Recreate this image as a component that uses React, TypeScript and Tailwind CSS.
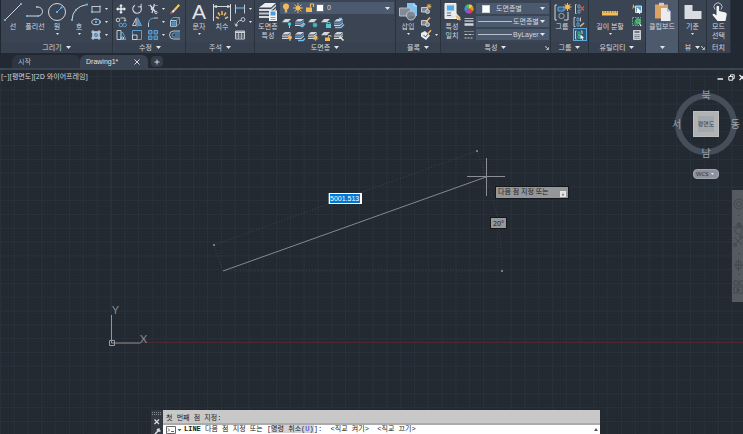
import type { ReactNode } from "react";
import { useState } from "react";

const BLUE = "#5fa8dc";
const LIGHT = "#d3d7dd";
const AMBER = "#f0b95a";

const Caret = ({ small }: { small?: boolean }) => (
  <svg
    viewBox="0 0 5 3"
    className={small ? "w-[3px] h-[2px] shrink-0" : "w-[5px] h-[3px] shrink-0"}
  >
    <path d="M0 0h5L2.5 3z" fill="#e2e5ea" />
  </svg>
);

/* 12 x 12 drawing used for the small tools */
const S = ({ children }: { children: ReactNode }) => (
  <svg
    viewBox="0 0 12 12"
    className="size-3 shrink-0"
    fill="none"
    stroke={LIGHT}
    strokeWidth={0.9}
  >
    {children}
  </svg>
);

/* 20 x 20 drawing used for the large tools */
const L = ({ children }: { children: ReactNode }) => (
  <svg
    viewBox="0 0 20 20"
    className="size-5 shrink-0"
    fill="none"
    stroke={LIGHT}
    strokeWidth={1}
  >
    {children}
  </svg>
);

const Dot = ({ x, y }: { x: number; y: number }) => (
  <rect x={x - 0.9} y={y - 0.9} width="1.8" height="1.8" fill="#74bdf0" stroke="none" />
);

const Sheets = ({ edge = LIGHT }: { edge?: string }) => (
  <g stroke="none">
    <path d="M4 2h6L7 4.6H1z" fill={LIGHT} />
    <path d="M1 5.6h6L10 3v1.2L7 6.8H1z" fill={edge} />
    <path d="M1 7.8h6l3-2.6v1.2L7 9H1z" fill={LIGHT} />
  </g>
);

const Sheet = () => <path d="M4 2h6L7 5.2H1z" fill={LIGHT} stroke="none" />;

type BigButtonProps = {
  icon: ReactNode;
  label: string;
  second?: string;
  caret?: boolean;
  className: string;
};

const BigButton = ({ icon, label, second, caret, className }: BigButtonProps) => (
  <button
    type="button"
    className={`flex flex-col items-center shrink-0 pt-0.5 hover:bg-white/10 ${className}`}
  >
    {icon}
    <span className="leading-[9px] whitespace-nowrap">{label}</span>
    {second && <span className="leading-[9px] whitespace-nowrap">{second}</span>}
    {caret && (
      <span className="pt-0.5">
        <Caret small />
      </span>
    )}
  </button>
);

type Tool = { name: string; icon: ReactNode; caret?: boolean; active?: boolean };

const ToolColumn = ({ tools, className }: { tools: Tool[]; className: string }) => (
  <div className={`flex flex-col shrink-0 pt-0.5 ${className}`}>
    {tools.map((tool) => (
      <button
        key={tool.name}
        type="button"
        aria-label={tool.name}
        className={`h-[13px] flex items-center gap-[3px] hover:bg-white/10 ${
          tool.active ? "bg-[#2f5878] outline outline-[#5fa8dc] -outline-offset-1" : ""
        }`}
      >
        {tool.icon}
        {tool.caret && <Caret small />}
      </button>
    ))}
  </div>
);

type PanelProps = {
  title: string;
  caret?: boolean;
  launcher?: boolean;
  highlight?: boolean;
  className: string;
  children: ReactNode;
};

const Panel = ({ title, caret = true, launcher, highlight, className, children }: PanelProps) => (
  <section
    className={`flex flex-col shrink-0 border-r border-[#2a323e] ${
      highlight ? "bg-[#4d596c]" : "bg-[#3b4453]"
    } ${className}`}
  >
    <div className="h-[42px] flex">{children}</div>
    <div
      className={`h-[11px] flex items-center justify-center gap-1 relative ${
        highlight ? "" : "bg-[#384150]"
      }`}
    >
      {title && <span>{title}</span>}
      {caret && <Caret />}
      {launcher && (
        <svg viewBox="0 0 5 5" className="size-1 absolute right-px bottom-[3px]">
          <path d="M0 0h2M0 0v2M1 1l3 3M4.5 1.5v3h-3" stroke={LIGHT} fill="none" />
        </svg>
      )}
    </div>
  </section>
);

const drawTools: Tool[] = [
  {
    name: "직사각형",
    caret: true,
    icon: (
      <S>
        <rect x="2" y="3.5" width="8" height="5.5" />
        <Dot x={10} y={3.5} />
        <Dot x={2} y={9} />
      </S>
    ),
  },
  {
    name: "타원",
    caret: true,
    icon: (
      <S>
        <ellipse cx="6" cy="6" rx="4.3" ry="2.7" />
        <Dot x={6} y={6} />
        <Dot x={6} y={3.2} />
        <Dot x={10} y={6} />
      </S>
    ),
  },
  {
    name: "해치",
    caret: true,
    icon: (
      <S>
        <rect x="3" y="3" width="6" height="6" fill="#4f8ab5" />
        <path d="M3 1v10M9 1v10M1 3h10M1 9h10" />
        <path d="m3.5 8.5 5-5M3.5 5.5l2-2M6.5 8.5l2-2" stroke="#9bd0f5" strokeWidth=".6" />
      </S>
    ),
  },
];

const modifyColumns: Tool[][] = [
  [
    {
      name: "이동",
      icon: (
        <S>
          <path
            d="M6 1 8 3.3H6.7v2h2V4L11 6 8.7 8V6.7h-2v2H8L6 11 4 8.7h1.3v-2h-2V8L1 6l2.3-2v1.3h2v-2H4z"
            fill="#eef0f3"
            stroke="none"
          />
        </S>
      ),
    },
    {
      name: "복사",
      icon: (
        <S>
          <circle cx="3" cy="4" r="1.8" />
          <path d="M5.5 2H10v3M8.8 4 10 5.3 11.2 4" />
          <circle cx="5.8" cy="9" r="1.8" stroke={BLUE} />
          <circle cx="9.6" cy="9" r="1.8" stroke={BLUE} />
        </S>
      ),
    },
    {
      name: "신축",
      icon: (
        <S>
          <path d="M2 1.5h4v9H2z" />
          <path d="M6 3.5h2l2.7 7H6z" stroke={BLUE} />
          <path d="M5 9h4M7.5 7.5 9 9l-1.5 1.5" />
        </S>
      ),
    },
  ],
  [
    {
      name: "회전",
      icon: (
        <S>
          <path d="M4 2.2A4.300 4.300 0 1 0 9.200 3" strokeWidth="1.1" />
          <path d="M6.800 3.800h3.400V.8" />
        </S>
      ),
    },
    {
      name: "대칭",
      icon: (
        <S>
          <path d="M5 2.5v7H1.500z" />
          <path d="M7 2.5v7h3.500z" fill="#3f82b3" stroke={BLUE} />
          <path d="M6 1v10" strokeWidth=".5" />
        </S>
      ),
    },
    {
      name: "축척",
      icon: (
        <S>
          <path d="M1.5 1.5h9v9h-9z" stroke={BLUE} />
          <path d="M1.5 6h4.500v4.500H1.500z" />
        </S>
      ),
    },
  ],
  [
    {
      name: "자르기",
      caret: true,
      icon: (
        <S>
          <path d="M1 2.5h3M8 2.5h3" stroke={BLUE} />
          <path d="m3 2 5.500 7M7.500 1 5 10M4.500 3v4" strokeWidth="1.3" />
          <circle cx="9" cy="9.5" r="1.2" />
        </S>
      ),
    },
    {
      name: "모깎기",
      caret: true,
      icon: (
        <S>
          <path d="M1.5 11V7" />
          <path d="M1.5 7Q2 2.500 7 2" stroke={BLUE} />
          <path d="M7 2h4" />
        </S>
      ),
    },
    {
      name: "배열",
      caret: true,
      icon: (
        <S>
          <path d="M1.5 1.5H5V5H1.500z" fill="#3a6c92" stroke={BLUE} />
          <path d="M7 1.5h3.500V5H7zM1.500 7H5v3.500H1.500zM7 7h3.500v3.500H7z" stroke={BLUE} fill="#3a6c92" />
        </S>
      ),
    },
  ],
  [
    {
      name: "지우기",
      icon: (
        <S>
          <g stroke="none">
            <path d="m9.500 1 1.500 1.500L6 8 4.500 6.500z" fill="#f3c667" />
            <path d="M4.500 6.500 6 8 4 10 2.500 8.500z" fill="#f1e9e0" />
            <path d="M2.500 8.500 4 10l-1 .8H1.300V9.500z" fill="#e2574c" />
          </g>
        </S>
      ),
    },
    {
      name: "분해",
      icon: (
        <S>
          <path d="M1.500 4.500h5.800v5.800H1.500z" />
          <path d="m1.500 4.500 2.700-3h6.300v6L7.300 10.300M7.300 4.500l3-3" stroke={BLUE} />
          <path d="M3 6h3v3H3z" fill="#3f82b3" stroke={BLUE} />
        </S>
      ),
    },
    {
      name: "간격띄우기",
      icon: (
        <S>
          <path d="M11 2H4.500a4 4 0 0 0 0 8H11" />
          <path d="M11 4H5a2 2 0 0 0 0 4h6M11 6H6" stroke={BLUE} />
        </S>
      ),
    },
  ],
];

const annotationTools: Tool[] = [
  {
    name: "선형 치수",
    caret: true,
    icon: (
      <S>
        <path d="M1.500 1.500v9M10.500 1.500v9" />
        <path d="M2 5h8" stroke={BLUE} strokeWidth="1.3" />
      </S>
    ),
  },
  {
    name: "지시선",
    caret: true,
    icon: (
      <S>
        <circle cx="9" cy="3.5" r="1.9" />
        <path d="M7 4.500Q3.500 4 2 10M1 7.500 2 10.300l2-1.500" />
      </S>
    ),
  },
  {
    name: "테이블",
    icon: (
      <S>
        <path d="M1.500 2h9v8h-9z" />
        <path d="M1.500 3.300h9" strokeWidth="1.6" />
        <path d="M1.500 6h9M1.500 8h9M4.500 3.500V10M7.500 3.500V10" strokeWidth=".6" />
      </S>
    ),
  },
];

const layerTools: Tool[][] = [
  [
    {
      name: "끄기",
      icon: (
        <S>
          <Sheet />
          <circle cx="8.5" cy="7" r="1.7" fill="#45d0dc" stroke="none" />
          <path d="M8.500 8.500V11" />
        </S>
      ),
    },
    {
      name: "켜기",
      icon: (
        <S>
          <Sheets />
          <circle cx="9" cy="7.5" r="1.9" fill={AMBER} stroke="none" />
          <path d="M9 9v2" />
        </S>
      ),
    },
  ],
  [
    {
      name: "분리",
      icon: (
        <S>
          <Sheets edge={BLUE} />
          <path d="M11 6.500 8.500 9.500 6 8.500" stroke="#74bdf0" strokeWidth="1.6" />
        </S>
      ),
    },
    {
      name: "분리 해제",
      icon: (
        <S>
          <Sheets edge={BLUE} />
          <path d="M4 10.500h5l2-2" stroke="#74bdf0" strokeWidth="1.4" />
        </S>
      ),
    },
  ],
  [
    {
      name: "동결",
      icon: (
        <S>
          <Sheet />
          <circle cx="8" cy="8" r="2" fill="#3aa6ad" stroke="none" />
          <path
            d="M8 5.500v5M5.500 8h5M6.200 6.200l3.600 3.600M9.800 6.200 6.200 9.800"
            stroke="#4cc3c7"
            strokeWidth=".7"
          />
        </S>
      ),
    },
    {
      name: "동결 해제",
      icon: (
        <S>
          <Sheets />
          <circle cx="8.5" cy="8" r="1.7" fill={AMBER} stroke="none" />
          <path d="M8.500 5v6M5.500 8h6M6.500 6l4 4M10.500 6l-4 4" stroke={AMBER} strokeWidth=".7" />
        </S>
      ),
    },
  ],
  [
    {
      name: "잠금",
      icon: (
        <S>
          <Sheet />
          <path d="M6 7h5v4H6z" fill="#58c5cf" stroke="none" />
          <path d="M7 7V5.500h3V7" stroke="#58c5cf" />
        </S>
      ),
    },
    {
      name: "잠금 해제",
      icon: (
        <S>
          <Sheet />
          <path d="M5 7.500h5V11H5z" fill={AMBER} stroke="none" />
          <path d="M8.500 7.500v-2H11V7" stroke={AMBER} />
        </S>
      ),
    },
  ],
  [
    {
      name: "현재로 설정",
      icon: (
        <S>
          <Sheets edge={BLUE} />
          <path d="M2 10.500h6l3-3M6 1.500h3" stroke="#74bdf0" strokeWidth="1.5" />
        </S>
      ),
    },
    {
      name: "일치",
      icon: (
        <S>
          <Sheets />
          <path d="m7 7 3.500 3.500" stroke="#f1e3c0" strokeWidth="1.6" />
          <path d="m6 8 2-2" />
        </S>
      ),
    },
  ],
];

const BlockBase = () => (
  <>
    <path d="M1.500 4.500h6V9h-6z" fill="#7b8490" />
    <circle cx="7.5" cy="8.5" r="2" fill="#8d959f" />
  </>
);

const blockTools: Tool[] = [
  {
    name: "작성",
    icon: (
      <S>
        <BlockBase />
        <path
          d="M9 .8v5M6.500 3.300h5M7.200 1.500l3.600 3.600M10.800 1.500 7.200 5.100"
          stroke={AMBER}
        />
      </S>
    ),
  },
  {
    name: "편집",
    icon: (
      <S>
        <BlockBase />
        <path d="m6 6 4-4.500" stroke={AMBER} strokeWidth="1.6" />
      </S>
    ),
  },
  {
    name: "속성 편집",
    caret: true,
    icon: (
      <S>
        <path d="m1 4 4-2 5 4.500-4 4.500L1 7.500z" fill="#e8eaed" stroke="none" />
        <path d="m3.500 6 2 2L8 5" stroke="#3b4453" />
        <path d="M7.500 5 11 1.300" stroke={AMBER} strokeWidth="1.6" />
      </S>
    ),
  },
];

const propertyTools: Tool[] = [
  {
    name: "색상",
    icon: (
      <S>
        <g stroke="none">
          <path d="M6 6V1.300a4.700 4.700 0 0 1 4.100 2.400z" fill="#f4c63e" />
          <path d="m6 6 4.100-2.300a4.700 4.700 0 0 1 0 4.600z" fill="#f08a2e" />
          <path d="m6 6 4.100 2.300A4.700 4.700 0 0 1 6 10.700z" fill="#e2433a" />
          <path d="M6 6v4.700a4.700 4.700 0 0 1-4.100-2.400z" fill="#a24bd0" />
          <path d="M6 6 1.900 8.300a4.700 4.700 0 0 1 0-4.600z" fill="#3f8fe6" />
          <path d="M6 6 1.900 3.700A4.700 4.700 0 0 1 6 1.300z" fill="#4dbb5b" />
        </g>
      </S>
    ),
  },
  {
    name: "선가중치",
    icon: (
      <S>
        <path d="M1.500 2.500h9" strokeWidth=".8" />
        <path d="M1.500 5h9" strokeWidth="1.3" />
        <path d="M1.500 8.500h9" strokeWidth="2.5" />
      </S>
    ),
  },
  {
    name: "선종류",
    icon: (
      <S>
        <path d="M1.500 2.500h9" strokeDasharray="1 1" />
        <path d="M1.500 5.500h9" strokeDasharray="3 1" />
        <path d="M1.500 9h9" strokeDasharray="2 1" />
      </S>
    ),
  },
];

const groupTools: Tool[] = [
  {
    name: "그룹 해제",
    icon: (
      <S>
        <path d="M3.500 1.500h-1v9h1" />
        <path d="M5 2h2v3H5zM5 7h2v3H5z" stroke={BLUE} />
        <path d="m7.500 3.500 3.500 4M11 3.500l-3.500 4" stroke="#e0504a" strokeWidth="1.3" />
      </S>
    ),
  },
  {
    name: "그룹 편집",
    icon: (
      <S>
        <path d="M2.500 1.500H1v9h1.500" />
        <path d="M4 2h2v3H4zM4 7h2v3H4z" stroke={BLUE} />
        <path d="M7.500 1.500v4" />
        <path d="m7 10.500 4-3.500" stroke={AMBER} strokeWidth="1.5" />
      </S>
    ),
  },
  {
    name: "그룹 선택 켜기",
    active: true,
    icon: (
      <S>
        <path d="M3.500 2h-1v8h1M8 2h1v3" />
        <path d="M5 3h2v2.500H5zM5 6.500h2V9H5z" stroke="#48bd7c" />
        <path
          d="m7.500 5.500 3.500 3.300-1.500.2.8 1.800-.8.3-.8-1.800-1.200.9z"
          fill="#fff"
          stroke="none"
        />
      </S>
    ),
  },
];

const utilityTools: Tool[] = [
  {
    name: "신속 선택",
    icon: (
      <S>
        <path d="M2 1 4 4.500H2.700L1.500 6.500z" fill={AMBER} stroke="none" />
        <path d="M4.500 3h6v6.500h-6z" fill="#4f9bd1" stroke="#e8eaed" />
        <path d="m6 4.500 4.500 4-2 .2.8 1.800-1 .4-.8-1.800L6 10.300z" fill="#fff" stroke="none" />
      </S>
    ),
  },
  {
    name: "모두 선택",
    icon: (
      <S>
        <path d="M1.500 1.500h8v8h-8z" strokeDasharray="1.5 1" stroke="#62c88c" />
        <path d="M3 5.500h4V9H3z" fill="#2f8a58" stroke="none" />
        <circle cx="7" cy="5" r="2.3" fill="#3fa56c" stroke="#62c88c" />
        <path d="m7.500 6.500 3.500 3.200-1.500.1.500 1.500z" fill="#fff" stroke="none" />
      </S>
    ),
  },
  {
    name: "빠른 계산기",
    icon: (
      <S>
        <path d="M2.500 1.500h7v9h-7z" fill="#d3d7dd" />
        <path d="M3.500 3h5" stroke="#3b4453" strokeWidth="1.3" />
        <path
          d="M3.500 5.800h5M3.500 7.500h5M3.500 9.200h5"
          stroke="#3b4453"
          strokeDasharray="1.2 .7"
        />
      </S>
    ),
  },
];

const ValueSelect = ({
  label,
  value,
  swatch,
}: {
  label: string;
  value: string;
  swatch?: boolean;
}) => (
  <div className="h-[11px] w-full bg-[#4c5a70] flex items-center pr-1">
    {swatch ? (
      <span className="size-2 bg-white border border-gray-300 ml-1.5 mr-1 shrink-0" />
    ) : (
      <span className="h-px w-[34px] bg-[#b9bfc8] ml-0.5 shrink-0" />
    )}
    <select
      aria-label={label}
      className={`appearance-none flex-1 min-w-0 h-[11px] bg-transparent outline-none leading-[11px] font-['Liberation_Sans','Noto_Sans_CJK_KR',sans-serif] ${
        swatch ? "pl-0.5" : "pl-px"
      }`}
    >
      <option>{value}</option>
    </select>
    <Caret />
  </div>
);

const Ribbon = () => (
  <div className="h-[53px] flex shrink-0 bg-[#222933] pl-px overflow-hidden">
    <Panel title="그리기" className="w-28">
      <BigButton
        className="w-[22px] ml-px"
        label="선"
        icon={
          <L>
            <path d="M2 18 18 2" />
            <Dot x={2} y={18} />
            <Dot x={18} y={2} />
          </L>
        }
      />
      <BigButton
        className="w-[22px]"
        label="폴리선"
        icon={
          <L>
            <path d="M2 14h11a4.500 4.500 0 0 0 0-9h-2" />
            <Dot x={2} y={14} />
            <Dot x={13} y={14} />
            <Dot x={12} y={5} />
          </L>
        }
      />
      <BigButton
        className="w-[22px]"
        label="원"
        caret
        icon={
          <L>
            <circle cx="10" cy="10" r="8.5" />
            <path d="m10 10 4-4" stroke={BLUE} />
            <Dot x={10} y={10} />
            <Dot x={14.5} y={5.5} />
          </L>
        }
      />
      <BigButton
        className="w-[22px]"
        label="호"
        caret
        icon={
          <L>
            <path d="M3 18Q3.500 5 18 2.500" />
            <Dot x={3} y={18} />
            <Dot x={7} y={8} />
            <Dot x={18} y={2.5} />
          </L>
        }
      />
      <ToolColumn tools={drawTools} className="w-5" />
    </Panel>

    <Panel title="수정" className="w-[73px] pl-0.5">
      {modifyColumns.map((tools, i) => (
        <ToolColumn key={i} tools={tools} className={i === 2 ? "w-[22px]" : "w-4"} />
      ))}
    </Panel>

    <Panel title="주석" className="w-[69px]">
      <BigButton
        className="w-6 ml-px"
        label="문자"
        caret
        icon={
          <span className="h-5 text-[21px] leading-5 font-['Liberation_Sans',sans-serif] text-[#e2e4e8]">
            A
          </span>
        }
      />
      <BigButton
        className="w-[22px]"
        label="치수"
        icon={
          <L>
            <path d="M1.500 2v17M18.500 2v17M2 4.500h16" />
            <path d="m2 4.500 2.500-1v2zM18 4.500l-2.500-1v2z" fill={LIGHT} />
            <path
              d="M10 9v4M6 10.500l2 3M14 10.500l-2 3M4 15l3 1.500M16 15l-3 1.500"
              stroke={AMBER}
              strokeWidth="1.5"
            />
          </L>
        }
      />
      <ToolColumn tools={annotationTools} className="w-5 ml-px" />
    </Panel>

    <Panel title="도면층" className="w-[141px]">
      <BigButton
        className="w-6 ml-px"
        label="도면층"
        second="특성"
        icon={
          <L>
            <g stroke="none" fill={LIGHT}>
              <path d="M7 1h11l-5 4.500H1z" fill="#eceef1" />
              <path d="M1 7h12l5-4.500v2L13 9H1z" />
              <path d="M1 10.500h12l5-4.500v2l-5 4.500H1z" fill="#bfc4cc" />
              <path d="M1 14h10v2H1z" />
              <path d="M11 8.500h8V19h-8z" fill="#f2f4f6" />
              <path d="M12.500 9.500h5v4h-5z" fill="#4b9cdb" />
              <path d="M12.500 15h5v.8h-5zM12.500 17h5v.8h-5z" fill="#6f7a88" />
            </g>
          </L>
        }
      />
      <div className="flex-1 flex flex-col pt-0.5 pr-px">
        <div className="h-3 bg-[#4c5a70] flex items-center pr-1">
          <S>
            <circle cx="6" cy="4.5" r="3" fill={AMBER} stroke="none" />
            <path d="M4.800 7h2.400v2.500H4.800z" fill={AMBER} stroke="none" />
            <path d="M4.800 10h2.400" />
          </S>
          <S>
            <circle cx="6" cy="6" r="2.5" fill={AMBER} stroke="none" />
            <path d="M6 1v10M1 6h10M2.500 2.500l7 7M9.500 2.500l-7 7" stroke={AMBER} />
          </S>
          <S>
            <path d="M2 5.500h6V10H2z" fill={AMBER} stroke="none" />
            <path d="M6.500 5.500V2h3v3" stroke={AMBER} strokeWidth="1.2" />
          </S>
          <span className="size-2 bg-white border border-gray-500 shrink-0" />
          <select
            aria-label="도면층"
            className="appearance-none flex-1 min-w-0 h-3 pl-[3px] bg-transparent outline-none leading-3"
          >
            <option>0</option>
          </select>
          <Caret />
        </div>
        <div className="flex gap-px pl-px">
          {layerTools.map((tools, i) => (
            <ToolColumn key={i} tools={tools} className="w-3" />
          ))}
        </div>
      </div>
    </Panel>

    <Panel title="블록" className="w-[45px]">
      <BigButton
        className="w-6"
        label="삽입"
        caret
        icon={
          <L>
            <path d="M9 1h7l3 3v10H9z" fill="#7ec4f3" stroke="none" />
            <path d="M16 1v3h3" stroke="#d8edfb" strokeWidth=".7" />
            <path d="M1.500 6h11v8h-11z" fill="#828b96" stroke="#b6bcc4" />
            <circle
              cx="13"
              cy="13.5"
              r="4.5"
              fill="#77808c"
              fillOpacity=".85"
              stroke="#c2c7ce"
            />
          </L>
        }
      />
      <ToolColumn tools={blockTools} className="w-[18px]" />
    </Panel>

    <Panel title="특성" launcher className="w-[110px]">
      <BigButton
        className="w-[22px]"
        label="특성"
        second="일치"
        icon={
          <L>
            <path d="M3 1.500h11v15H3z" fill="#dfe2e6" stroke="#f5f6f8" />
            <path d="M5 3.500h7v5H5z" fill="#55a9e8" stroke="none" />
            <path d="M5 11h5M5 13.500h4" stroke="#65707e" />
            <path d="m9 11 3-1.500 6 6-2 2.500z" fill="#efe9db" stroke="#fff" strokeWidth=".6" />
            <path d="m14 14 4.500 4" stroke={AMBER} strokeWidth="1.8" />
          </L>
        }
      />
      <ToolColumn tools={propertyTools} className="w-[13px]" />
      <div className="flex-1 flex flex-col gap-0.5 pt-[3px] pr-px">
        <ValueSelect label="색상" value="도면층별" swatch />
        <ValueSelect label="선가중치" value="도면층별" />
        <ValueSelect label="선종류" value="ByLayer" />
      </div>
    </Panel>

    <Panel title="그룹" className="w-[38px]">
      <BigButton
        className="w-[22px]"
        label="그룹"
        icon={
          <L>
            <path d="M5 3H3v15h2M12 18h4v-8" />
            <path d="M6 5h6v4H6z" fill="#33658c" stroke={BLUE} />
            <circle cx="9.5" cy="14" r="2.7" stroke="#9da5b0" />
            <circle cx="15.5" cy="5" r="2.4" fill={AMBER} stroke="none" />
            <path
              d="M15.500 1v8M11.500 5h8M12.700 2.200l5.600 5.600M18.300 2.200l-5.600 5.600"
              stroke={AMBER}
            />
          </L>
        }
      />
      <ToolColumn tools={groupTools} className="w-3.5" />
    </Panel>

    <Panel title="유틸리티" className="w-[57px]">
      <BigButton
        className="w-[42px]"
        label="길이 분할"
        caret
        icon={
          <L>
            <path d="M2 9h16v4.500H2z" fill="#f3bd5b" stroke="none" />
            <path
              d="M4 9v2M6.500 9v2M9 9v2M11.500 9v2M14 9v2M16.500 9v2"
              stroke="#8a6425"
              strokeWidth=".7"
            />
          </L>
        }
      />
      <ToolColumn tools={utilityTools} className="w-3" />
    </Panel>

    <Panel title="" highlight className="w-[33px]">
      <BigButton
        className="w-full"
        label="클립보드"
        icon={
          <L>
            <path d="M3 2.500h13v14H3z" fill="#dba265" stroke="none" />
            <path d="M7 .8h5v3H7z" fill="#c9ced5" stroke="none" />
            <path d="M9 6h6l3.500 3.500V19H9z" fill="#e9ebee" stroke="none" />
            <path d="M15 6v3.500h3.500z" fill="#b4bac2" stroke="none" />
          </L>
        }
      />
    </Panel>

    <Panel title="뷰" launcher className="w-7">
      <BigButton
        className="w-full"
        label="기준"
        caret
        icon={
          <L>
            <path d="M1.500 3h8v6h9v8h-17z" fill="#d9dce0" stroke="none" />
          </L>
        }
      />
    </Panel>

    <Panel title="터치" caret={false} className="w-6">
      <BigButton
        className="w-full"
        label="모드"
        second="선택"
        icon={
          <L>
            <path d="M6 7.500a4 4 0 1 1 6 0" stroke="#b8bec7" />
            <path
              d="M7.500 4.500q1.300-1.500 2.600 0V9l6.400 1.500q1.500.5 1.200 2.300L16.500 19h-8L3.500 13q.3-2 2-1l2 1.500z"
              fill="#f2f3f5"
              stroke="none"
            />
          </L>
        }
      />
    </Panel>
  </div>
);

const FileTabs = () => (
  <div className="h-[17px] shrink-0 flex items-end bg-[#222933] border-b-2 border-[#3b4453]">
    <button
      type="button"
      className="h-[13px] w-[68px] ml-3 pl-1.5 text-left rounded-t-md bg-[#2d3541] text-[#b9bfc8]"
    >
      시작
    </button>
    <div className="h-[13px] w-[68px] pl-1.5 pr-2 flex items-center justify-between rounded-t-md bg-[#3b4453]">
      <button
        type="button"
        className="text-[#dfe2e6] font-['Liberation_Sans',sans-serif]"
      >
        Drawing1*
      </button>
      <button type="button" aria-label="닫기">
        <svg viewBox="0 0 6 6" className="size-1.5" stroke={LIGHT} fill="none">
          <path d="m.5.5 5 5M5.500.5l-5 5" />
        </svg>
      </button>
    </div>
    <button
      type="button"
      aria-label="새 도면"
      className="h-[11px] w-3 ml-[3px] mb-px flex items-center justify-center rounded bg-[#343d4a]"
    >
      <svg viewBox="0 0 6 6" className="size-1.5" stroke={LIGHT} fill="none">
        <path d="M3 .5v5M.5 3h5" />
      </svg>
    </button>
  </div>
);

/* Model space: grid, UCS icon and the line being drawn */
const Drawing = () => (
  <svg className="absolute inset-0 size-full" fill="none">
    <defs>
      <pattern id="minor" x="0" y="6" width="2.76" height="2.76" patternUnits="userSpaceOnUse">
        <path d="M0 0h2.760M0 0v2.760" stroke="#2b333d" strokeWidth=".4" />
      </pattern>
      <pattern id="major" x="0" y="6" width="13.8" height="13.8" patternUnits="userSpaceOnUse">
        <path d="M0 .5h13.800M.5 0v13.800" stroke="#28313b" />
      </pattern>
    </defs>
    <rect width="100%" height="100%" fill="url(#minor)" />
    <rect width="100%" height="100%" fill="url(#major)" />
    <path d="M111.500 0v245" stroke="#213a2d" />
    <path d="M142 272.500H3000" stroke="#4c2a33" />

    <g stroke="#3c444f" strokeDasharray="1 2">
      <path d="m223 201-9-26 263-94 9 26" />
      <path d="M486 107a279 279 0 0 1 16 94H223" />
    </g>
    <path d="M213 174h2v2h-2zM476 80h2v2h-2zM501 200h2v2h-2z" fill="#767c85" />
    <path d="m223 201 263-94" stroke="#85898f" />
    <path d="M467 106.500h38M486.500 88v38" stroke="#8b8f95" />

    <path d="M111.500 245v28h29" stroke="#989390" />
    <path d="M109.500 270.500h5v5h-5z" stroke="#989ca2" />
    <g fill="#858a91" fontSize="11" fontFamily="Lato, sans-serif">
      <text x="112" y="244">Y</text>
      <text x="140" y="273">X</text>
    </g>
  </svg>
);

const ViewCube = () => (
  <div className="absolute top-5 right-0 w-[74px] flex flex-col items-center">
    <div className="relative size-[68px] flex items-center justify-center">
      <div className="absolute inset-[3px] rounded-full border-[6px] border-[#464e59]" />
      <button
        type="button"
        className="relative size-[26px] bg-[#b0b2b4] border border-[#bcbec0] text-[6px] text-[#3d444c] flex items-center justify-center"
      >
        <span className="size-4 bg-[#a2a8ac] flex items-center justify-center whitespace-nowrap">
          평면도
        </span>
      </button>
      <div className="absolute inset-0 text-[10px] leading-[10px] text-[#a0a4a9]">
        <span className="absolute inset-x-0 top-0 text-center">북</span>
        <span className="absolute inset-x-0 bottom-0 text-center">남</span>
        <span className="absolute inset-y-0 left-0 flex items-center">서</span>
        <span className="absolute inset-y-0 right-0 flex items-center">동</span>
      </div>
    </div>
    <button
      type="button"
      className="h-2.5 w-[26px] mt-[11px] pl-0.5 pr-1 rounded-sm bg-[#8e919f] text-[6px] text-[#333943] flex items-center justify-between border border-[#a2a4af]"
    >
      WCS
      <Caret small />
    </button>
  </div>
);

const NavigationBar = () => (
  <div className="absolute right-0 top-[120px] h-28 w-[11px] bg-[#555a61]">
    <svg viewBox="0 0 11 112" className="w-[11px] h-28" fill="none" stroke="#414851">
      <circle cx="7" cy="14" r="5" />
      <circle cx="7" cy="14" r="2.5" />
      <path
        d="M4 43 2 37l1.500-.5 1.500 2v-5h1.200v4-5h1.300v5-4h1.300v5-3h1.200v5l-1.500 4z"
        strokeWidth=".8"
      />
      <path d="m2 47 8 8M10 47l-8 8" />
      <circle cx="3" cy="55" r="1.5" />
      <circle cx="9" cy="47" r="1.5" />
      <path d="M2 75h9M6.500 69v12M4 71.500h5M4 78.500h5M4 72v6M9 72v6" />
      <path d="M2 91h4v4H2zM7.500 91h4v4h-4zM2 97h9v6H2z" />
      <path d="m5 98 3 2-3 2z" fill="#414851" />
      <path d="M6 25.500h2M6 63.500h2M6 84.500h2" />
    </svg>
  </div>
);

const CommandLine = () => (
  <div className="absolute bottom-0 left-[151px] w-[449px] max-w-full h-6 flex overflow-hidden text-[#222]">
    <div className="w-3 shrink-0 bg-[#343a44] flex flex-col items-center">
      <svg viewBox="0 0 12 24" className="w-3 h-6" fill="none" stroke="#dadde1">
        <path d="M1 2.500h10M1 4.500h10" stroke="#868b93" strokeDasharray="1 1" />
        <path d="m3.500 9.500 4.500 4.500M8 9.500 3.500 14" strokeWidth="1.2" />
        <path d="m4 24 3.500-3.500M6 20.500q.5-1.500 2-1.500v2h1.500" strokeWidth="1.5" />
      </svg>
    </div>
    <div className="flex-1 min-w-0 bg-white font-['Liberation_Mono','Noto_Sans_CJK_KR',monospace] leading-[9px] whitespace-pre">
      <div className="h-[15px] bg-[#c8c8c8] border-b-2 border-[#ababab] pt-1 pl-[3px]">
        첫 번째 점 지정:
      </div>
      <div className="h-[9px] flex items-center pl-[3px] pr-0.5">
        <svg viewBox="0 0 16 9" className="w-4 h-[9px] shrink-0" fill="none" stroke="#666">
          <path d="M.5 1.500h9v7h-9z" />
          <path d="m2 3.500 1.500 1.500L2 6.500M5 6.500h3" />
          <path d="M11.500 4h4l-2 2.200z" fill="#555" stroke="none" />
        </svg>
        <label htmlFor="command" className="pl-0.5">
          <b>LINE</b> 다음 점 지정 또는 [
          <span className="bg-[#d3d3d3]">
            명령 취소(<span className="text-[#2525d8]">U</span>)
          </span>
          ]:{"  "}&lt;직교 켜기&gt;{"  "}&lt;직교 끄기&gt;
        </label>
        <input id="command" type="text" className="flex-1 min-w-0 h-2 outline-none" />
        <svg viewBox="0 0 4 3" className="w-1 h-[3px] shrink-0">
          <path d="M0 3 2 0l2 3z" fill="#555" />
        </svg>
      </div>
    </div>
  </div>
);

const Canvas = () => {
  const [length, setLength] = useState("5001.513");

  return (
    <main className="relative flex-1 min-h-0 overflow-hidden bg-[#212830]">
      <Drawing />
      <p className="absolute left-px top-0.5 leading-[9px] text-[#d0d3d8]">
        [−][평면도][2D 와이어프레임]
      </p>

      {/* Drawing window controls */}
      <div className="absolute right-0 top-1 flex items-center gap-1">
        <button type="button" aria-label="최소화">
          <svg viewBox="0 0 7 7" className="size-[7px]" stroke="#eceef0" strokeWidth="1.5">
            <path d="M.5 5h5.500" />
          </svg>
        </button>
        <button type="button" aria-label="복원">
          <svg viewBox="0 0 7 7" className="size-[7px]" stroke="#eceef0" fill="none">
            <path d="M2.500 2V.8H6.200v3.700H5M.8 2.500h4v3.700h-4z" />
          </svg>
        </button>
        <button type="button" aria-label="닫기">
          <svg viewBox="0 0 4 7" className="w-1 h-[7px]" stroke="#eceef0" fill="none">
            <path d="m.5 1 5 5M.5 6l5-5" strokeWidth="1.4" />
          </svg>
        </button>
      </div>

      <ViewCube />
      <NavigationBar />

      {/* Dynamic input */}
      <div className="absolute left-[328px] top-[123px] w-[34px] h-[11px] bg-white border-l border-gray-500 px-px py-px">
        <input
          type="text"
          aria-label="길이"
          value={length}
          onChange={(e) => setLength(e.target.value)}
          className="block w-[30px] h-[9px] leading-[9px] bg-[#0078d7] text-white outline-none font-['Liberation_Sans',sans-serif]"
        />
      </div>
      <div className="absolute left-[495px] top-[116px] w-[74px] h-[13px] bg-[#969798] border border-[#15191e] text-[#1c2025] flex items-start justify-between px-0.5">
        <span className="whitespace-nowrap">다음 점 지정 또는</span>
        <svg viewBox="0 0 6 6" className="size-1.5 mt-1">
          <path d="M0 0h6v6H0z" fill="#e6e7e8" />
          <path d="M3 1.500V4M2 3.500h2L3 5z" stroke="#8d8f92" strokeWidth=".7" fill="#8d8f92" />
        </svg>
      </div>
      <output className="absolute left-[490px] top-[147px] w-[17px] h-3 bg-[#969798] border border-[#15191e] text-[#1c2025] flex items-center pl-0.5">
        20°
      </output>

      <CommandLine />
    </main>
  );
};

export default function App() {
  return (
    <div className="h-screen flex flex-col overflow-hidden bg-[#222933] text-[#d3d7dd] text-[7px] leading-[9px] font-['Noto_Sans','Noto_Sans_CJK_KR',sans-serif]">
      <Ribbon />
      <FileTabs />
      <Canvas />
    </div>
  );
}
